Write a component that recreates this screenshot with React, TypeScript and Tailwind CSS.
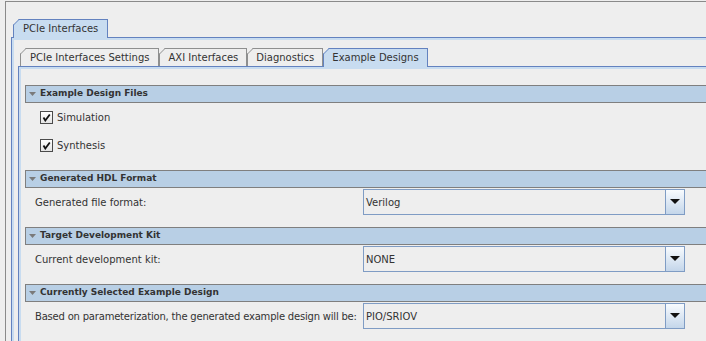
import React from "react";

function Chamfer({ color }: { color: string }) {
  return (
    <svg className="absolute -left-px -top-px" width="7" height="7" viewBox="0 0 7 7">
      <polygon points="0,0 6,0 0,6" fill="#eeeeee" />
      <line x1="0" y1="6.5" x2="6.5" y2="0" stroke={color} strokeWidth="1" />
    </svg>
  );
}

function Tab({ label, selected, wide }: { label: string; selected?: boolean; wide?: boolean }) {
  const color = selected ? "#6382bf" : "#8e8f8f";
  const pad = wide ? " px-[9px]" : " px-[8px]";
  return (
    <div
      className={
        (selected
          ? "relative z-10 -mb-px flex h-[19px] items-center border-l border-r border-t border-[#6382bf] bg-[#c8dcf0] pb-px"
          : "relative flex h-[18px] items-center border-l border-r border-t border-[#8e8f8f] bg-[#eeeeee]") + pad
      }
    >
      <Chamfer color={color} />
      {label}
    </div>
  );
}

function Header({ title }: { title: string }) {
  return (
    <div className="flex h-[18px] items-center border-b border-l border-t border-[#7f7f7f] bg-[#b8cfe5] pl-[3px] text-[9px] font-bold">
      <svg width="8" height="5" viewBox="0 0 8 5" className="mr-[3px]">
        <polygon points="0,0 7,0 3.5,4" fill="#7a7a7a" />
      </svg>
      {title}
    </div>
  );
}

function Check({ label }: { label: string }) {
  return (
    <div className="flex h-[28px] items-center pl-[15px]">
      <div className="flex h-[13px] w-[13px] items-center justify-center border border-[#4a4a4a] bg-gradient-to-b from-[#ffffff] to-[#e4e4e4]">
        <svg width="9" height="9" viewBox="0 0 9 9">
          <path d="M1.5 4.5 L3.3 7.5 L7.8 1.5" fill="none" stroke="#111" strokeWidth="1.8" />
        </svg>
      </div>
      <span className="ml-[4px]">{label}</span>
    </div>
  );
}

function Combo({ label, value, tight }: { label: string; value: string; tight?: boolean }) {
  return (
    <div className="mt-px flex h-[26px] items-center pl-[10px]">
      <div className={tight ? "w-[328px] whitespace-nowrap tracking-[-0.2px]" : "w-[328px] whitespace-nowrap"}>
        {label}
      </div>
      <div className="flex h-[26px] w-[322px] items-stretch border border-[#7f9cc4] bg-[#eeeeee]">
        <div className="flex flex-1 items-center pl-[2px]">{value}</div>
        <div className="flex w-[19px] items-center justify-center border-l border-[#7f9cc4] bg-gradient-to-b from-[#f8fbfe] to-[#c4d6ea]">
          <svg width="10" height="6" viewBox="0 0 10 6">
            <polygon points="0,0 10,0 5,5" fill="#111" />
          </svg>
        </div>
      </div>
    </div>
  );
}

export default function App() {
  return (
    <div className="h-[341px] w-[706px] overflow-hidden bg-[#eeeeee] pl-[5px] pt-px font-['DejaVu_Sans',sans-serif] text-[10px] text-[#333333]">
      <div className="h-[400px] border-l border-t border-[#8a8a8a] pl-[5px] pt-[17px]">
        <div className="flex pl-[2px]">
          <Tab label="PCIe Interfaces" selected wide />
        </div>
        <div className="border-l border-t border-[#6382bf]">
          <div className="h-[400px] border-l-2 border-t-2 border-[#c8dcf0] pl-[4px] pt-[8px]">
            <div className="flex pl-[2px]">
              <Tab label="PCIe Interfaces Settings" wide />
              <Tab label="AXI Interfaces" />
              <Tab label="Diagnostics" />
              <Tab label="Example Designs" selected />
            </div>
            <div className="border-l border-t border-[#6382bf]">
              <div className="h-[400px] border-l-2 border-t-2 border-[#c8dcf0] pl-[4px] pt-[16px]">
                <Header title="Example Design Files" />
                <Check label="Simulation" />
                <Check label="Synthesis" />
                <div className="mt-[11px]">
                  <Header title="Generated HDL Format" />
                </div>
                <Combo label="Generated file format:" value="Verilog" />
                <div className="mt-[12px]">
                  <Header title="Target Development Kit" />
                </div>
                <Combo label="Current development kit:" value="NONE" />
                <div className="mt-[12px]">
                  <Header title="Currently Selected Example Design" />
                </div>
                <Combo
                  label="Based on parameterization, the generated example design will be:"
                  value="PIO/SRIOV"
                  tight
                />
              </div>
            </div>
          </div>
        </div>
      </div>
    </div>
  );
}
